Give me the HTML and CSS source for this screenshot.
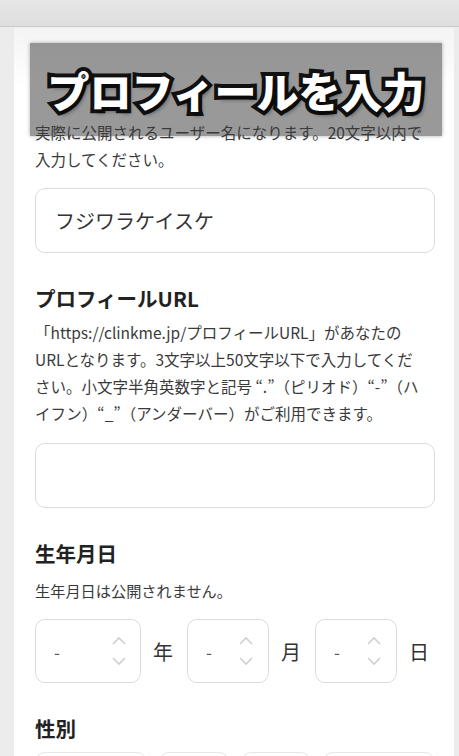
FILE: index.html
```html
<!DOCTYPE html>
<html lang="ja">
<head>
    <meta charset="UTF-8">
    <meta name="viewport" content="width=device-width, initial-scale=1.0">
    <title>プロフィール設定</title>
    <link rel="stylesheet" href="styles.css">
</head>
<body>
    <div class="topbar"></div>

    <div class="page">
        <div class="card">
            <!-- ユーザー名 (見出しはバナーの下に隠れる) -->
            <div class="field first">
                <p class="desc">実際に公開されるユーザー名になります。20文字以内で入力してください。</p>
                <div class="text-input">フジワラケイスケ</div>
            </div>

            <!-- プロフィールURL -->
            <div class="field">
                <h2 class="label">プロフィールURL</h2>
                <p class="desc">「https://clinkme.jp/プロフィールURL」があなたのURLとなります。3文字以上50文字以下で入力してください。小文字半角英数字と記号 “.”（ピリオド）“-”（ハイフン）“_”（アンダーバー）がご利用できます。</p>
                <div class="text-input"></div>
            </div>

            <!-- 生年月日 -->
            <div class="field">
                <h2 class="label">生年月日</h2>
                <p class="desc small">生年月日は公開されません。</p>
                <div class="date-row">
                    <div class="num-box year">
                        <span>-</span>
                        <svg class="spin" width="16" height="32" viewBox="0 0 16 32"><path d="M2 9 L8 3 L14 9 M2 23 L8 29 L14 23" fill="none" stroke="#cfcfcf" stroke-width="1.6"/></svg>
                    </div>
                    <span class="unit">年</span>
                    <div class="num-box">
                        <span>-</span>
                        <svg class="spin" width="16" height="32" viewBox="0 0 16 32"><path d="M2 9 L8 3 L14 9 M2 23 L8 29 L14 23" fill="none" stroke="#cfcfcf" stroke-width="1.6"/></svg>
                    </div>
                    <span class="unit">月</span>
                    <div class="num-box">
                        <span>-</span>
                        <svg class="spin" width="16" height="32" viewBox="0 0 16 32"><path d="M2 9 L8 3 L14 9 M2 23 L8 29 L14 23" fill="none" stroke="#cfcfcf" stroke-width="1.6"/></svg>
                    </div>
                    <span class="unit">日</span>
                </div>
            </div>

            <!-- 性別 -->
            <div class="field">
                <h2 class="label">性別</h2>
                <div class="gender-row">
                    <div class="option wide"></div>
                    <div class="option"></div>
                    <div class="option"></div>
                    <div class="option wide"></div>
                </div>
            </div>
        </div>

        <div class="banner">プロフィールを入力</div>
    </div>
</body>
</html>
```

FILE: styles.css
```css
* {
    box-sizing: border-box;
    margin: 0;
    padding: 0;
}

body {
    background: #ececec;
    font-family: "Noto Sans CJK JP", "Noto Sans", sans-serif;
    color: #333;
    overflow: hidden;
}

.topbar {
    height: 27px;
    background: linear-gradient(#e6e6e6, #dedede);
    border-bottom: 1px solid #cbcbcb;
}

.page {
    position: relative;
    padding: 1px 5px 0 14px;
}

.card {
    background: linear-gradient(#f4f4f4, #ffffff 60px);
    padding: 91px 19px 40px 21px;
    min-height: 800px;
}

.field {
    margin-bottom: 31px;
}

.field.first .desc {
    margin-bottom: 15px;
}

.label {
    font-size: 20.5px;
    font-weight: bold;
    line-height: 28px;
    color: #222;
    margin-bottom: 7px;
}

.desc {
    max-width: 390px;
    font-size: 15.5px;
    line-height: 27px;
    color: #3a3a3a;
    margin-bottom: 16px;
}

.desc.small {
    font-size: 15.2px;
    margin-top: 10px;
    margin-bottom: 15px;
}

.text-input {
    height: 65px;
    border: 1px solid #dcdcdc;
    border-radius: 10px;
    background: white;
    padding: 0 19px;
    display: flex;
    align-items: center;
    font-size: 20px;
    color: #333;
}

.date-row {
    display: flex;
    align-items: center;
}

.num-box {
    width: 82px;
    height: 64px;
    border: 1px solid #dcdcdc;
    border-radius: 10px;
    display: flex;
    align-items: center;
    justify-content: space-between;
    padding: 0 14px 0 18px;
    font-size: 17px;
    color: #555;
}

.num-box.year {
    width: 106px;
    padding-right: 13px;
}

.unit {
    font-size: 20px;
    margin: 0 14px 0 12px;
}

.unit:last-child {
    margin-right: 0;
}

.gender-row {
    display: flex;
    gap: 12px;
    margin-top: 10px;
}

.option {
    flex: 1;
    height: 56px;
    border: 1px solid #e6e6e6;
    border-radius: 10px;
}

.option.wide {
    flex: 1.6;
}

.banner {
    position: absolute;
    left: 30px;
    top: 16px;
    width: 412px;
    height: 93px;
    background: rgba(60, 60, 60, 0.52);
    box-shadow: 0 0 4px rgba(60, 60, 60, 0.4);
    display: flex;
    align-items: center;
    justify-content: center;
    font-size: 42px;
    font-weight: 900;
    color: white;
    -webkit-text-stroke: 8px #111;
    paint-order: stroke fill;
    text-shadow: 3px 4px 4px rgba(0, 0, 0, 0.45);
}
```
